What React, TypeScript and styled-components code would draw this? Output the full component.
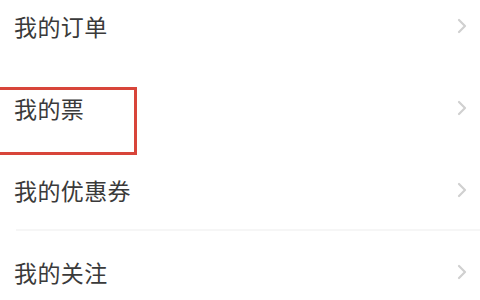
import styled, { createGlobalStyle } from 'styled-components';

const GlobalStyle = createGlobalStyle`
  html, body {
    margin: 0;
    padding: 0;
    background: #ffffff;
    overflow: hidden;
  }
  body {
    font-family: "Noto Sans CJK SC", "Noto Sans", sans-serif;
  }
`;

const Page = styled.div`
  width: 480px;
  height: 300px;
  overflow: hidden;
  background: #ffffff;
`;

const List = styled.ul`
  list-style: none;
  margin: -15px 0 0 0;
  padding: 0;
`;

const Row = styled.li<{ $divider?: boolean }>`
  position: relative;
  height: 82px;
  display: flex;
  align-items: center;
  justify-content: space-between;
  padding: 0 13px 0 14px;
  box-sizing: border-box;

  &::after {
    content: '';
    display: ${p => (p.$divider ? 'block' : 'none')};
    position: absolute;
    left: 16px;
    right: 0;
    bottom: 0;
    height: 2px;
    background: #f6f6f6;
  }
`;

const Label = styled.span`
  font-size: 23px;
  line-height: 1;
  color: #3a3a3a;
  letter-spacing: 0.4px;
`;

const Highlight = styled.div`
  position: absolute;
  left: -10px;
  top: 20px;
  width: 147px;
  height: 68px;
  border: 3px solid #d8453a;
  box-sizing: border-box;
  pointer-events: none;
`;

function Chevron() {
  return (
    <svg width="10" height="16" viewBox="0 0 10 16" fill="none">
      <path d="M2 2 L8 8 L2 14" stroke="#d0d0d0" strokeWidth="2.2" strokeLinecap="round" strokeLinejoin="round" />
    </svg>
  );
}

const items = [
  { label: '我的订单' },
  { label: '我的票', marked: true },
  { label: '我的优惠券', divider: true },
  { label: '我的关注' },
];

export default function App() {
  return (
    <Page>
      <GlobalStyle />
      <List>
        {items.map(item => (
          <Row key={item.label} $divider={item.divider}>
            <Label>{item.label}</Label>
            <Chevron />
            {item.marked && <Highlight />}
          </Row>
        ))}
      </List>
    </Page>
  );
}
